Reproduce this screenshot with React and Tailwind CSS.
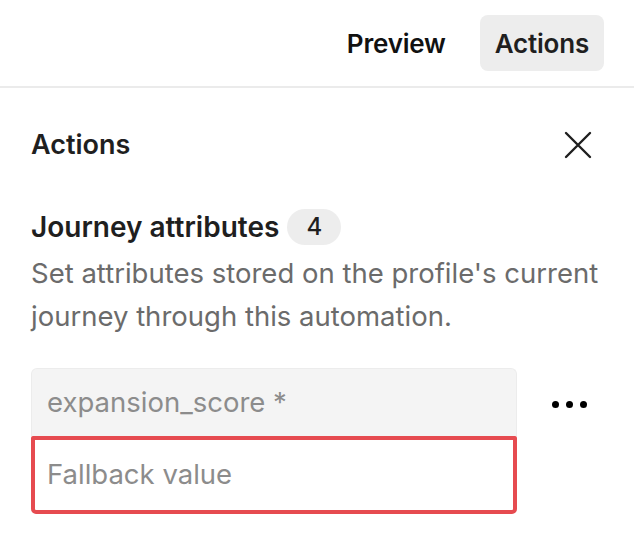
import React from "react";

export default function App() {
  return (
    <div className="w-[634px] h-[534px] bg-white overflow-hidden font-['Inter',sans-serif] text-[#1f1f1f]">
      <div className="h-[88px] border-b-2 border-[#ebebeb] flex items-start justify-end pt-[15px] pr-[30px] gap-[18px]">
        <button className="h-[56px] px-[16px] rounded-[8px] text-[26px] font-semibold text-[#111] tracking-[-0.2px]">Preview</button>
        <button className="h-[56px] px-[15px] rounded-[8px] bg-[#ededed] text-[26px] font-semibold text-[#1f1f1f] tracking-[-0.2px]">Actions</button>
      </div>
      <div className="px-[31px]">
        <div className="flex items-center justify-between h-[44px] mt-[35px]">
          <h2 className="text-[27px] font-semibold">Actions</h2>
          <svg width="28" height="28" viewBox="0 0 28 28" className="mr-[11px]" fill="none" stroke="#1f1f1f" strokeWidth="2.4" strokeLinecap="round">
            <path d="M2 2 L26 26 M26 2 L2 26" />
          </svg>
        </div>
        <div className="flex items-center gap-[8px] mt-[42px] h-[36px]">
          <h3 className="text-[28px] font-semibold">Journey attributes</h3>
          <span className="h-[36px] w-[54px] rounded-full bg-[#ededed] flex items-center justify-center text-[24px] font-medium">4</span>
        </div>
        <p className="mt-[7px] text-[27.5px] leading-[43px] text-[#6b6b6b]">
          Set attributes stored on the profile's current journey through this automation.
        </p>
        <div className="flex items-start mt-[30px]">
          <div className="w-[486px] flex flex-col">
            <div className="h-[68px] rounded-t-[6px] bg-[#f4f4f4] border border-[#ececec] border-b-0 flex items-center px-[15px] text-[27.5px] text-[#8c8c8c]">
              expansion_score *
            </div>
            <div className="h-[78px] rounded-b-[5px] rounded-t-[2px] border-[4px] border-[#e64b50] bg-white flex items-center px-[12px] text-[27.5px] text-[#8c8c8c]">
              Fallback value
            </div>
          </div>
          <div className="flex items-center gap-[7px] ml-[35px] mt-[33px]">
            <span className="w-[7px] h-[7px] rounded-full bg-black"></span>
            <span className="w-[7px] h-[7px] rounded-full bg-black"></span>
            <span className="w-[7px] h-[7px] rounded-full bg-black"></span>
          </div>
        </div>
      </div>
    </div>
  );
}
